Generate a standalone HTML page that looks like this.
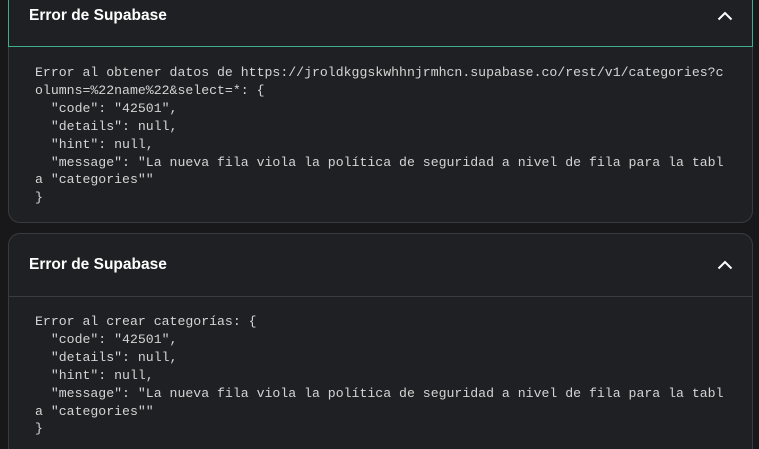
<!DOCTYPE html>
<html><head><style>
html,body{margin:0;width:759px;height:449px;overflow:hidden}
body{background:#18181b;position:relative;font-family:"Liberation Sans",sans-serif;}
.card{position:absolute;left:8px;width:745px;background:#1f2023;border:1px solid #3a3b3f;border-radius:12px;box-sizing:border-box;overflow:hidden}
.t{position:absolute;color:#fff;font-weight:bold;font-size:15.5px}
pre{margin:0;position:absolute;left:26px;font-family:"Liberation Mono",monospace;font-size:13.2px;line-height:17.9px;color:#d4d4d4}
</style></head><body>
<div class="card" style="top:-20px;height:243px;">
 <pre style="top:83px">Error al obtener datos de https://jroldkggskwhhnjrmhcn.supabase.co/rest/v1/categories?c
olumns=%22name%22&amp;select=*: {
  "code": "42501",
  "details": null,
  "hint": null,
  "message": "La nueva fila viola la política de seguridad a nivel de fila para la tabl
a "categories""
}</pre>
</div>
<div style="position:absolute;left:8px;top:-5px;width:745px;height:52px;box-sizing:border-box;border:1px solid #3fae8a;background:#1f2023"></div>
<div class="t" style="top:7px;left:29px">Error de Supabase</div>
<svg style="position:absolute;top:11px;left:717px" width="16" height="10" viewBox="0 0 16 10"><path d="M1.5 8.5L8 2L14.5 8.5" stroke="#fff" stroke-width="2" fill="none"/></svg>

<div class="card" style="top:233px;height:216px;border-bottom:none;border-radius:12px 12px 0 0;">
 <div style="position:absolute;left:0;top:0;right:0;height:62px;border-bottom:1px solid #3a3b3f"></div>
 <div class="t" style="top:22px;left:20px">Error de Supabase</div>
 <svg style="position:absolute;top:26px;left:708px" width="16" height="10" viewBox="0 0 16 10"><path d="M1.5 8.5L8 2L14.5 8.5" stroke="#fff" stroke-width="2" fill="none"/></svg>
 <pre style="top:79px">Error al crear categorías: {
  "code": "42501",
  "details": null,
  "hint": null,
  "message": "La nueva fila viola la política de seguridad a nivel de fila para la tabl
a "categories""
}</pre>
</div>
</body></html>
